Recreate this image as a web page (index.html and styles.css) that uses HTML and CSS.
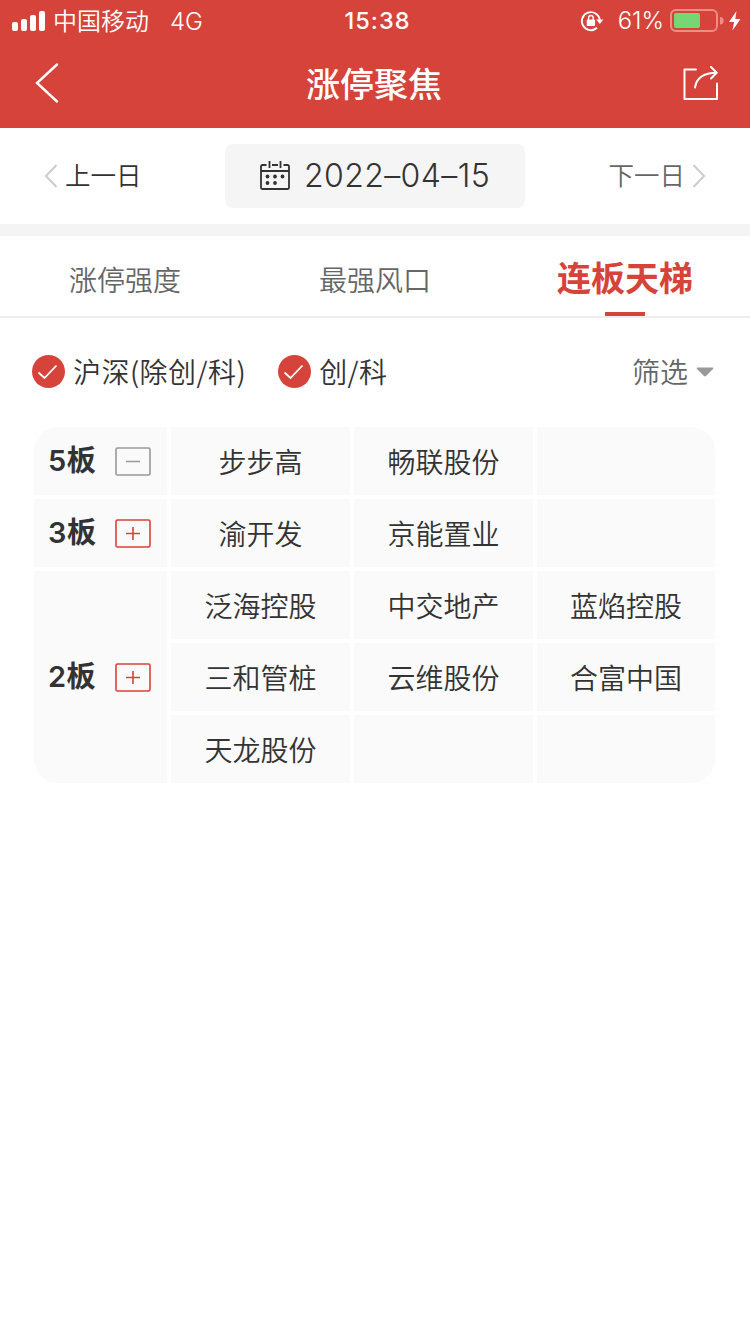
FILE: index.html
```html
<!DOCTYPE html>
<html lang="zh-CN">
<head>
    <meta charset="UTF-8">
    <meta name="viewport" content="width=device-width, initial-scale=1.0">
    <title>涨停聚焦</title>
    <link rel="stylesheet" href="styles.css">
</head>
<body>
    <header class="header">
        <div class="status">
            <div class="status-left">
                <svg class="signal" width="34" height="20" viewBox="0 0 34 20" fill="#fff">
                    <rect x="0" y="11" width="6" height="9" rx="2"/>
                    <rect x="9" y="8" width="6" height="12" rx="2"/>
                    <rect x="18" y="4" width="6" height="16" rx="2"/>
                    <rect x="27" y="0" width="6" height="20" rx="2"/>
                </svg>
                <span class="carrier">中国移动</span>
                <span class="network">4G</span>
            </div>
            <div class="time">15:38</div>
            <div class="status-right">
                <svg class="lock" width="24" height="22" viewBox="0 0 24 22">
                    <path d="M17 17.800A9 9 0 1 1 19.800 10" fill="none" stroke="#fff" stroke-width="1.900"/>
                    <path d="M16.300 9.500h7l-3.500 4.500z" fill="#fff"/>
                    <rect x="6.700" y="9.500" width="8.400" height="6.500" rx="1" fill="#fff"/>
                    <path d="M8.600 10V7.800a2.300 2.300 0 0 1 4.600 0v2.200" fill="none" stroke="#fff" stroke-width="1.400"/>
                </svg>
                <span class="percent">61%</span>
                <svg class="battery" width="54" height="24" viewBox="0 0 54 24">
                    <rect x="1" y="1" width="46" height="21" rx="5" fill="none" stroke="#ec8d88" stroke-width="2"/>
                    <rect x="4" y="4" width="26" height="15" rx="2" fill="#76d672"/>
                    <path d="M50 8a3.600 3.600 0 0 1 0 7.400z" fill="#ec8d88"/>
                </svg>
                <svg class="bolt" width="12" height="20" viewBox="0 0 12 20" fill="#fff">
                    <path d="M7.500 0L0 11h5L3.500 19.500 11.500 8H6.300z"/>
                </svg>
            </div>
        </div>
        <div class="navbar">
            <svg width="24" height="40" viewBox="0 0 24 40" fill="none" stroke="#fff" stroke-width="2.400">
                <path d="M22 1.500L2 20l20 18.500" stroke-linecap="round"/>
            </svg>
            <h1 class="title">涨停聚焦</h1>
            <svg width="36" height="34" viewBox="0 0 36 34" fill="none" stroke="#fff" stroke-width="2" stroke-linecap="round" stroke-linejoin="round">
                <path d="M13 3.500H1.500V33H34V17.500"/>
                <path d="M12 21.500C13.500 12 20 7 33.500 6.800M28 1l5.700 5.800L28 12.500"/>
            </svg>
        </div>
    </header>

    <div class="date-bar">
        <a class="day prev">
            <svg width="14" height="24" viewBox="0 0 14 24"><path d="M12.500 1L2 12l10.500 11"/></svg>
            <span>上一日</span>
        </a>
        <div class="date">
            <svg width="30" height="30" viewBox="0 0 30 30" fill="none" stroke="#333" stroke-width="1.800">
                <path d="M6.500 4H2.500a1.500 1.500 0 0 0-1.500 1.500V26.500A1.500 1.500 0 0 0 2.500 28h25a1.500 1.500 0 0 0 1.500-1.500V5.500A1.500 1.500 0 0 0 27.500 4H23.500M12 4h6M1 10h28"/>
                <path d="M9.500 0v7M20.500 0v7"/>
                <g fill="#333" stroke="none">
                    <circle cx="7.500" cy="15.500" r="1.900"/><circle cx="15" cy="15.500" r="1.900"/><circle cx="22.500" cy="15.500" r="1.900"/>
                    <circle cx="7.500" cy="22" r="1.900"/><circle cx="15" cy="22" r="1.900"/>
                </g>
            </svg>
            <span>2022–04–15</span>
        </div>
        <a class="day next">
            <span>下一日</span>
            <svg width="14" height="24" viewBox="0 0 14 24"><path d="M1.500 1L12 12 1.500 23"/></svg>
        </a>
    </div>

    <nav class="tabs">
        <a class="tab">涨停强度</a>
        <a class="tab">最强风口</a>
        <a class="tab active">连板天梯</a>
    </nav>

    <div class="filters">
        <label class="check">
            <svg width="33" height="33" viewBox="0 0 33 33"><circle cx="16.500" cy="16.500" r="16.500"/><path d="M6.500 17.500l6 5.500L24.500 10.500"/></svg>
            <span>沪深(除创/科)</span>
        </label>
        <label class="check">
            <svg width="33" height="33" viewBox="0 0 33 33"><circle cx="16.500" cy="16.500" r="16.500"/><path d="M6.500 17.500l6 5.500L24.500 10.500"/></svg>
            <span>创/科</span>
        </label>
        <div class="select">
            <span>筛选</span>
            <svg width="18" height="10" viewBox="0 0 18 10" fill="#999"><path d="M1 .5h16q.8.500 0 1.500L10 9q-1 .8-2 0L1 2Q.2 1 1 .5z"/></svg>
        </div>
    </div>

    <div class="ladder">
        <div class="level">
            <span>5板</span>
            <svg class="toggle minus" width="36" height="29" viewBox="0 0 36 29"><rect x="1" y="1" width="34" height="27" rx="1.500"/><path d="M11 14.500h14"/></svg>
        </div>
        <div class="cell">步步高</div>
        <div class="cell">畅联股份</div>
        <div class="cell"></div>

        <div class="level">
            <span>3板</span>
            <svg class="toggle" width="36" height="29" viewBox="0 0 36 29"><rect x="1" y="1" width="34" height="27" rx="1.500"/><path d="M11 14.500h14M18 8v13"/></svg>
        </div>
        <div class="cell">渝开发</div>
        <div class="cell">京能置业</div>
        <div class="cell"></div>

        <div class="level level-tall">
            <span>2板</span>
            <svg class="toggle" width="36" height="29" viewBox="0 0 36 29"><rect x="1" y="1" width="34" height="27" rx="1.500"/><path d="M11 14.500h14M18 8v13"/></svg>
        </div>
        <div class="cell">泛海控股</div>
        <div class="cell">中交地产</div>
        <div class="cell">蓝焰控股</div>
        <div class="cell">三和管桩</div>
        <div class="cell">云维股份</div>
        <div class="cell">合富中国</div>
        <div class="cell">天龙股份</div>
        <div class="cell"></div>
        <div class="cell"></div>
    </div>
</body>
</html>
```
FILE: styles.css
```css
* {
    box-sizing: border-box;
}

body {
    margin: 0;
    font-family: Inter, "Noto Sans CJK SC", sans-serif;
    font-size: 28px;
    font-weight: 350;
    line-height: 40px;
    color: #333;
    background-color: #fff;
}

svg {
    display: block;
    flex: none;
}

.header {
    height: 128px;
    background-color: #d6433a;
    color: #fff;
}

.status {
    display: grid;
    grid-template-columns: 1fr auto 1fr;
    height: 41px;
    padding: 1px 9px 0 12px;
    font-size: 24px;
}

.status-left,
.status-right {
    display: flex;
    align-items: center;
}

.status-left svg {
    margin-bottom: 2px;
}

.status-right {
    justify-content: flex-end;
    padding-bottom: 2px;
}

.carrier {
    margin-left: 7px;
}

.network {
    margin-left: 21px;
}

.time {
    font-size: 23.5px;
    font-weight: 500;
    letter-spacing: 1px;
    padding-left: 2px;
}

.percent {
    margin: 0 6px 0 14px;
    font-size: 24px;
}

.bolt {
    margin-left: 5px;
}

.navbar {
    display: flex;
    align-items: center;
    justify-content: space-between;
    height: 87px;
    padding: 0 31px 3px 35px;
}

.title {
    margin: 4px 0 0 6px;
    font-size: 34px;
    font-weight: 500;
}

.date-bar {
    display: flex;
    align-items: center;
    justify-content: space-between;
    height: 108px;
    padding: 0 44px;
    border-bottom: 12px solid #f4f4f4;
}

.day {
    display: flex;
    align-items: center;
    gap: 7px;
    font-size: 25.5px;
}

.day svg {
    fill: none;
    stroke: #ccc;
    stroke-width: 2;
}

.next {
    color: #666;
}

.date {
    display: flex;
    align-items: center;
    justify-content: center;
    gap: 14px;
    width: 300px;
    height: 64px;
    border-radius: 8px;
    background-color: #f5f5f5;
    font-size: 32px;
    letter-spacing: 0.4px;
}

.tabs {
    display: flex;
    height: 82px;
    border-bottom: 2px solid #eee;
}

.tab {
    position: relative;
    flex: 1;
    line-height: 90px;
    text-align: center;
    color: #666;
}

.tab.active {
    line-height: 86px;
    font-size: 34px;
    font-weight: 700;
    color: #d6433a;
}

.tab.active::after {
    content: "";
    position: absolute;
    left: 105px;
    bottom: 0;
    width: 40px;
    height: 4px;
    background-color: #d6433a;
}

.filters {
    display: flex;
    align-items: center;
    height: 109px;
    padding: 0 36px 2px 32px;
    font-family: "Noto Sans CJK SC", sans-serif;
}

.filters span {
    padding-bottom: 2px;
}

.check {
    display: flex;
    align-items: center;
    gap: 8px;
    margin-right: 32px;
    letter-spacing: 0.45px;
}

.check circle {
    fill: #d6433a;
}

.check path {
    fill: none;
    stroke: #fff;
    stroke-width: 1.8;
}

.select {
    display: flex;
    align-items: center;
    gap: 8px;
    margin-left: auto;
    color: #666;
}

.ladder {
    display: grid;
    grid-template-columns: 133px 179px 179px 178px;
    grid-auto-rows: 68px;
    gap: 4px;
    width: 681px;
    margin-left: 34px;
    border-radius: 24px;
    overflow: hidden;
}

.level,
.cell {
    display: flex;
    align-items: center;
    background-color: #fafafa;
}

.cell {
    justify-content: center;
    padding-top: 3px;
}

.level {
    justify-content: space-between;
    padding: 0 16px 0 14px;
    font-size: 29px;
    font-weight: 600;
    letter-spacing: 0.5px;
}

.level-tall {
    grid-row: span 3;
}

.toggle {
    fill: none;
    stroke: #d6433a;
    stroke-width: 1.6;
}

.toggle.minus {
    stroke: #999;
}
```
